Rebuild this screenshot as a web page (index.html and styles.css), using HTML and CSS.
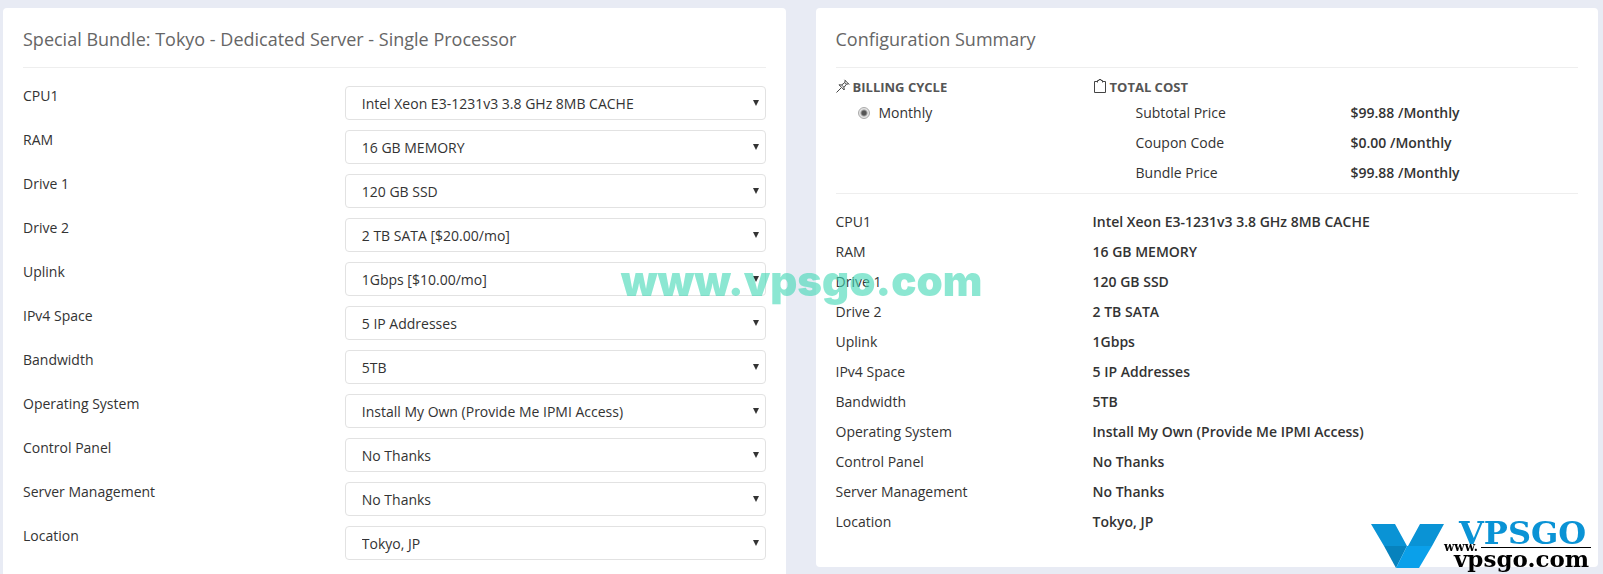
FILE: index.html
```html
<!DOCTYPE html>
<html lang="en">
<head>
    <meta charset="UTF-8">
    <meta name="viewport" content="width=device-width, initial-scale=1.0">
    <title>Configure Server</title>
    <link rel="stylesheet" href="styles.css">
</head>
<body>
    <main class="page">
        <section class="card card-form">
            <h2 class="card-title">Special Bundle: Tokyo - Dedicated Server - Single Processor</h2>
            <form class="config-form">
                <div class="form-row">
                    <label for="cpu">CPU1</label>
                    <select id="cpu"><option>Intel Xeon E3-1231v3 3.8 GHz 8MB CACHE</option></select>
                </div>
                <div class="form-row">
                    <label for="ram">RAM</label>
                    <select id="ram"><option>16 GB MEMORY</option></select>
                </div>
                <div class="form-row">
                    <label for="drive1">Drive 1</label>
                    <select id="drive1"><option>120 GB SSD</option></select>
                </div>
                <div class="form-row">
                    <label for="drive2">Drive 2</label>
                    <select id="drive2"><option>2 TB SATA [$20.00/mo]</option></select>
                </div>
                <div class="form-row">
                    <label for="uplink">Uplink</label>
                    <select id="uplink"><option>1Gbps [$10.00/mo]</option></select>
                </div>
                <div class="form-row">
                    <label for="ipv4">IPv4 Space</label>
                    <select id="ipv4"><option>5 IP Addresses</option></select>
                </div>
                <div class="form-row">
                    <label for="bandwidth">Bandwidth</label>
                    <select id="bandwidth"><option>5TB</option></select>
                </div>
                <div class="form-row">
                    <label for="os">Operating System</label>
                    <select id="os"><option>Install My Own (Provide Me IPMI Access)</option></select>
                </div>
                <div class="form-row">
                    <label for="panel">Control Panel</label>
                    <select id="panel"><option>No Thanks</option></select>
                </div>
                <div class="form-row">
                    <label for="management">Server Management</label>
                    <select id="management"><option>No Thanks</option></select>
                </div>
                <div class="form-row">
                    <label for="location">Location</label>
                    <select id="location"><option>Tokyo, JP</option></select>
                </div>
            </form>
        </section>

        <section class="card card-summary">
            <h2 class="card-title">Configuration Summary</h2>
            <div class="billing">
                <div class="billing-cycle">
                    <h3 class="section-title">
                        <svg class="icon" width="14" height="14" viewBox="0 0 14 14" aria-hidden="true">
                            <path d="M.5 13.500 5 9M8.500.8l4.700 4.700M9.200 1.500 8.800 3.600 5.600 6 3 5.800 8.200 11 8 8.400l2.400-3.200 2.100-.4M8.800 3.600l1.600 1.600M5.600 6 8 8.400"/>
                        </svg>
                        BILLING CYCLE
                    </h3>
                    <label class="cycle-option"><input type="radio" name="cycle" checked> Monthly</label>
                </div>
                <div class="total-cost">
                    <h3 class="section-title">
                        <svg class="icon" width="14" height="14" viewBox="0 0 14 14" aria-hidden="true">
                            <path d="M4.500 2.500h-3v11h11v-11h-3M4.500 3.500v-2h1.500v-1h2v1h1.500v2"/>
                        </svg>
                        TOTAL COST
                    </h3>
                    <dl class="cost-list">
                        <dt>Subtotal Price</dt><dd>$99.88 /Monthly</dd>
                        <dt>Coupon Code</dt><dd>$0.00 /Monthly</dd>
                        <dt>Bundle Price</dt><dd>$99.88 /Monthly</dd>
                    </dl>
                </div>
            </div>
            <dl class="summary-list">
                <dt>CPU1</dt><dd>Intel Xeon E3-1231v3 3.8 GHz 8MB CACHE</dd>
                <dt>RAM</dt><dd>16 GB MEMORY</dd>
                <dt>Drive 1</dt><dd>120 GB SSD</dd>
                <dt>Drive 2</dt><dd>2 TB SATA</dd>
                <dt>Uplink</dt><dd>1Gbps</dd>
                <dt>IPv4 Space</dt><dd>5 IP Addresses</dd>
                <dt>Bandwidth</dt><dd>5TB</dd>
                <dt>Operating System</dt><dd>Install My Own (Provide Me IPMI Access)</dd>
                <dt>Control Panel</dt><dd>No Thanks</dd>
                <dt>Server Management</dt><dd>No Thanks</dd>
                <dt>Location</dt><dd>Tokyo, JP</dd>
            </dl>
        </section>
    </main>

    <div class="watermark">www.vpsgo.com</div>

    <div class="logo">
        <svg width="222" height="60" viewBox="0 -8 222 60">
            <path fill="#0a93d5" d="M0 4h24l12 22H13zM49 4h24L61 26H37z"/>
            <path fill="#0782bd" d="M13 26h23L25 48z"/>
            <path fill="#0aa0ea" d="M36 26h25L48 48H25z"/>
            <text class="logo-name" x="88" y="24">VPSGO</text>
            <text class="logo-www" x="73" y="31">www.</text>
            <path fill="#000" d="M110 27h110v1H110z"/>
            <text class="logo-domain" x="83" y="47">vpsgo.com</text>
        </svg>
    </div>
</body>
</html>
```

FILE: styles.css
```css
* {
    box-sizing: border-box;
}

body {
    margin: 0;
    background-color: #e8ebf4;
    color: #333;
    font-family: "Open Sans", sans-serif;
    font-size: 14px;
    line-height: 20px;
}

.page {
    display: grid;
    grid-template-columns: 1fr 1fr;
    gap: 30px;
    min-height: 100vh;
    padding: 8px 5px 0 3px;
}

/* Cards */
.card {
    padding: 19px 20px 0;
    background-color: #fff;
    border-radius: 4px;
}

.card-form {
    border-radius: 4px 4px 0 0;
}

.card-summary {
    align-self: start;
    padding-bottom: 30px;
}

.card-title {
    margin: 0;
    padding-bottom: 16px;
    border-bottom: 1px solid #eee;
    color: #666;
    font-size: 18px;
    font-weight: 400;
    line-height: 24px;
}

/* Server options */
.config-form {
    display: grid;
    gap: 10px;
    padding-top: 18px;
}

.form-row {
    display: grid;
    grid-template-columns: 13fr 17fr;
}

.form-row select {
    width: 100%;
    height: 34px;
    padding: 2px 30px 0 16px;
    border: 1px solid #e2e2e2;
    border-radius: 4px;
    appearance: none;
    background: #fff url("data:image/svg+xml,%3Csvg xmlns='http://www.w3.org/2000/svg' width='6' height='6'%3E%3Cpath fill='%23333' d='M0 0h6L3 6z'/%3E%3C/svg%3E") no-repeat right 6px center;
    color: #333;
    font: inherit;
}

/* Billing */
.billing {
    display: grid;
    grid-template-columns: 9fr 17fr;
    padding: 9px 0 5px;
    border-bottom: 1px solid #eee;
}

.section-title {
    display: flex;
    align-items: center;
    gap: 3px;
    margin: 0 0 1px;
    color: #555;
    font-size: 13px;
    font-weight: 700;
    line-height: 20px;
}

.icon {
    margin-bottom: 2px;
    fill: none;
    stroke: #444;
    stroke-width: 1;
}

.cycle-option {
    display: flex;
    align-items: center;
    gap: 9px;
    height: 30px;
    padding-left: 22px;
}

.cycle-option input {
    width: 12px;
    height: 12px;
    margin: 0;
    border: 1px solid #aaa;
    border-radius: 50%;
    appearance: none;
    background: radial-gradient(circle, #555 0 2px, #e4e4e4 4px);
}

.cost-list,
.summary-list {
    display: grid;
    margin: 0;
    line-height: 30px;
}

.cost-list {
    grid-template-columns: 17fr 18fr;
    padding-left: 43px;
}

.summary-list {
    grid-template-columns: 9fr 17fr;
    padding-top: 13px;
}

.cost-list dd,
.summary-list dd {
    margin: 0;
    font-weight: 600;
}

/* Overlays */
.watermark {
    position: fixed;
    top: 49%;
    left: 50%;
    transform: translate(-50%, -50%);
    color: rgba(64, 215, 180, 0.6);
    font-family: Inter, sans-serif;
    font-size: 42px;
    font-weight: 900;
    line-height: 48px;
    pointer-events: none;
}

.logo {
    position: fixed;
    right: 10px;
    bottom: 2px;
    font-family: "DejaVu Serif", serif;
    font-weight: 700;
}

.logo svg {
    display: block;
}

.logo-name {
    fill: #0a93d5;
    font-size: 32px;
}

.logo-www {
    font-size: 12px;
}

.logo-domain {
    font-size: 23px;
}
```
